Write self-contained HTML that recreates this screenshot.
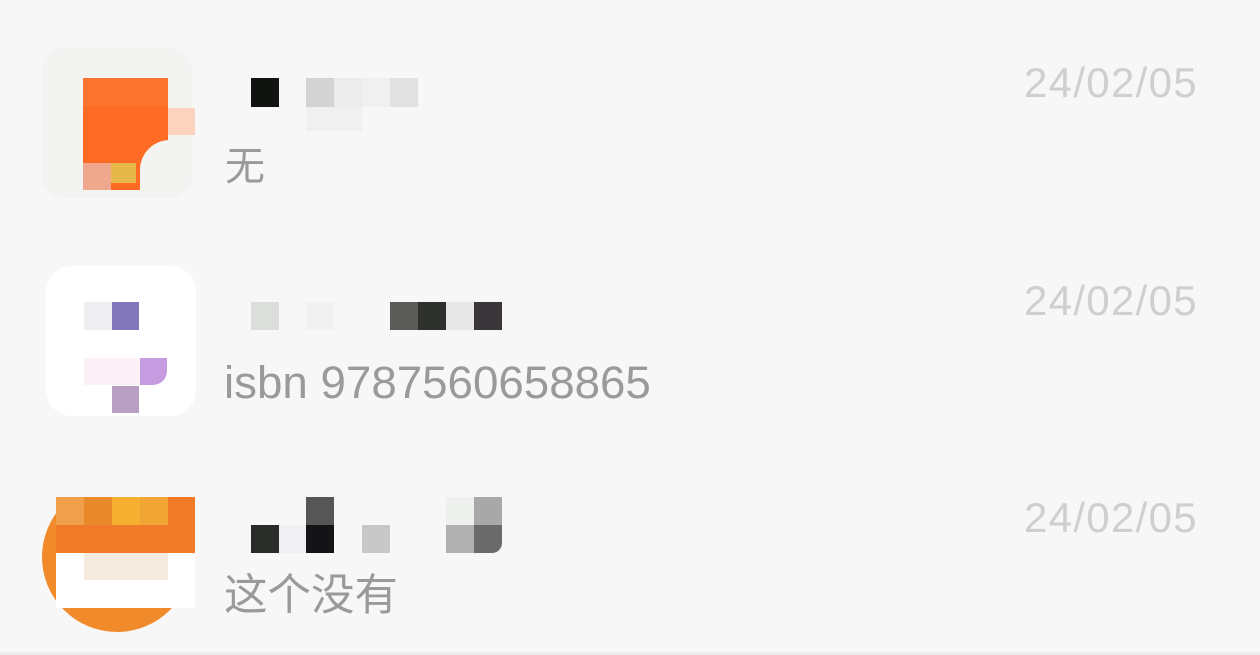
<!DOCTYPE html>
<html><head><meta charset="utf-8"><style>
html,body{margin:0;padding:0;}
body{width:1260px;height:655px;background:#f7f7f7;position:relative;overflow:hidden;font-family:"Liberation Sans","Noto Sans CJK SC",sans-serif;}
.b{position:absolute;}
.t{position:absolute;color:#9a9a9a;white-space:nowrap;line-height:1;}
.d{position:absolute;left:1024px;color:#cfcfcf;font-size:42px;letter-spacing:1.3px;line-height:1;}
</style></head><body>
<!-- row1 avatar -->
<div class="b" style="left:42px;top:48px;width:150px;height:150px;background:#f3f4f2;border-radius:22px;"></div>
<div class="b" style="left:83px;top:78px;width:85px;height:112px;background:#fd6b24;"></div>
<div class="b" style="left:83px;top:78px;width:85px;height:28px;background:#fd7430;"></div>
<div class="b" style="left:168px;top:108px;width:27px;height:27px;background:#fcd3bf;"></div>
<div class="b" style="left:83px;top:163px;width:28px;height:27px;background:#efa88e;"></div>
<div class="b" style="left:111px;top:163px;width:25px;height:20px;background:#e6b84a;"></div>
<div class="b" style="left:140px;top:140px;width:40px;height:50px;background:#f3f4f2;border-top-left-radius:30px;"></div>
<!-- row1 name -->
<div class="b" style="left:251px;top:78px;width:28px;height:29px;background:#111311;"></div>
<div class="b" style="left:306px;top:78px;width:28px;height:29px;background:#d3d3d3;"></div>
<div class="b" style="left:334px;top:78px;width:28px;height:29px;background:#ececec;"></div>
<div class="b" style="left:362px;top:78px;width:28px;height:29px;background:#f0f0f0;"></div>
<div class="b" style="left:390px;top:78px;width:28px;height:29px;background:#e1e1e1;"></div>
<div class="b" style="left:306px;top:107px;width:56px;height:24px;background:#f0f0f0;"></div>
<div class="t" style="left:225px;top:147px;font-size:40px;">无</div>
<div class="d" style="top:62px;">24/02/05</div>
<!-- row2 avatar -->
<div class="b" style="left:46px;top:266px;width:150px;height:150px;background:#ffffff;border-radius:26px;"></div>
<div class="b" style="left:84px;top:302px;width:28px;height:28px;background:#eeeef0;"></div>
<div class="b" style="left:112px;top:302px;width:27px;height:28px;background:#8277bb;"></div>
<div class="b" style="left:84px;top:358px;width:56px;height:27px;background:#fbf1f7;"></div>
<div class="b" style="left:140px;top:358px;width:27px;height:27px;background:#c69be0;border-bottom-right-radius:14px;"></div>
<div class="b" style="left:112px;top:386px;width:27px;height:27px;background:#b9a0c2;"></div>
<!-- row2 name -->
<div class="b" style="left:251px;top:302px;width:28px;height:28px;background:#dcdedc;"></div>
<div class="b" style="left:306px;top:302px;width:28px;height:28px;background:#f1f1f1;"></div>
<div class="b" style="left:390px;top:302px;width:28px;height:28px;background:#5a5b58;"></div>
<div class="b" style="left:418px;top:302px;width:28px;height:28px;background:#2e302d;"></div>
<div class="b" style="left:446px;top:302px;width:28px;height:28px;background:#e8e8e9;"></div>
<div class="b" style="left:474px;top:302px;width:28px;height:28px;background:#3a3538;"></div>
<div class="t" style="left:224px;top:360px;font-size:45.7px;">isbn 9787560658865</div>
<div class="d" style="top:280px;">24/02/05</div>
<!-- row3 avatar -->
<div class="b" style="left:42px;top:482px;width:150px;height:150px;background:#f08a2a;border-radius:50%;"></div>
<div class="b" style="left:56px;top:497px;width:28px;height:28px;background:#f0a04a;"></div>
<div class="b" style="left:84px;top:497px;width:28px;height:28px;background:#e8892a;"></div>
<div class="b" style="left:112px;top:497px;width:28px;height:28px;background:#f5b030;"></div>
<div class="b" style="left:140px;top:497px;width:28px;height:28px;background:#f0a535;"></div>
<div class="b" style="left:168px;top:497px;width:27px;height:28px;background:#f07a28;"></div>
<div class="b" style="left:56px;top:525px;width:139px;height:28px;background:#f07a28;"></div>
<div class="b" style="left:56px;top:553px;width:139px;height:55px;background:#ffffff;"></div>
<div class="b" style="left:84px;top:553px;width:84px;height:27px;background:#f6ebdf;"></div>
<div class="b" style="left:40px;top:470px;width:160px;height:27px;background:#f7f7f7;"></div>
<!-- row3 name -->
<div class="b" style="left:306px;top:497px;width:28px;height:28px;background:#555655;"></div>
<div class="b" style="left:446px;top:497px;width:28px;height:28px;background:#eef0ee;"></div>
<div class="b" style="left:474px;top:497px;width:28px;height:28px;background:#a8a8a8;"></div>
<div class="b" style="left:251px;top:525px;width:28px;height:28px;background:#2a2c2a;"></div>
<div class="b" style="left:279px;top:525px;width:27px;height:28px;background:#f0f0f2;"></div>
<div class="b" style="left:306px;top:525px;width:28px;height:28px;background:#141416;"></div>
<div class="b" style="left:362px;top:525px;width:28px;height:28px;background:#c8c8c8;"></div>
<div class="b" style="left:446px;top:525px;width:28px;height:28px;background:#b0b0b0;"></div>
<div class="b" style="left:474px;top:525px;width:28px;height:28px;background:#6a6a6a;border-bottom-right-radius:10px;"></div>
<div class="t" style="left:224px;top:575px;font-size:43.5px;">这个没有</div>
<div class="d" style="top:497px;">24/02/05</div>
<div class="b" style="left:0;top:652px;width:1260px;height:3px;background:#ececec;"></div>
</body></html>
